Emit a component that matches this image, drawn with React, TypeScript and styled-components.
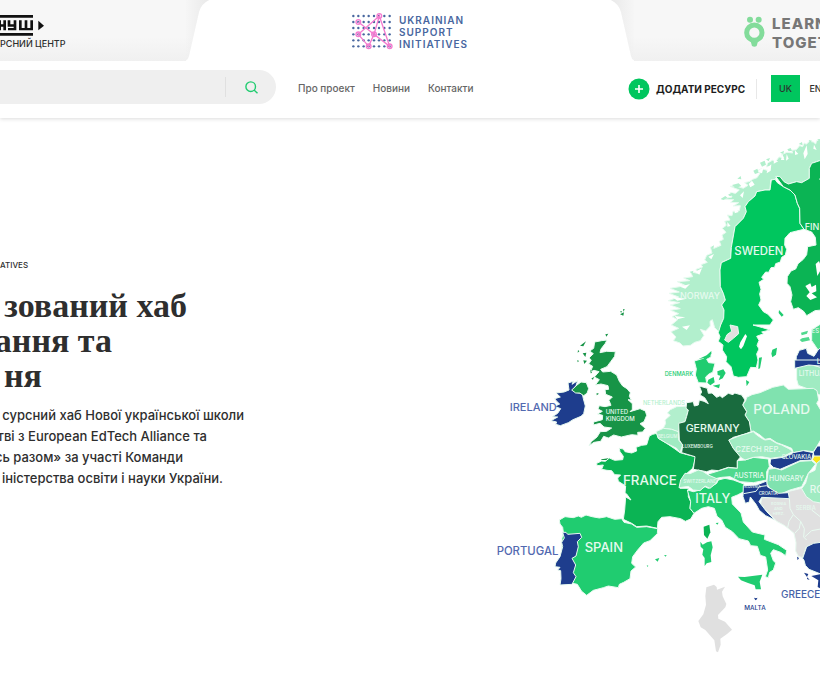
import React from "react";
import styled, { createGlobalStyle } from "styled-components";

const GlobalStyle = createGlobalStyle`
  * { box-sizing: border-box; }
  body { margin: 0; background: #fff; color: #2e2e2e; font-family: Inter, "Noto Sans", sans-serif; overflow-x: hidden; }
  button, input { font: inherit; color: inherit; border: 0; padding: 0; background: none; }
  a { color: inherit; text-decoration: none; }
`;

const Header = styled.header`
  height: 118px;
  background: #fff;
  box-shadow: 0 1px 4px rgba(0, 0, 0, 0.14);
`;
const BrandBar = styled.div`
  display: grid;
  grid-template-columns: minmax(0, 1fr) 448px minmax(0, 1fr);
  height: 61px;
`;
const SideBrand = styled.a<{ $end?: boolean }>`
  display: flex;
  justify-content: ${(p) => (p.$end ? "flex-end" : "flex-start")};
  align-items: flex-start;
  overflow: hidden;
  padding-top: 14px;
  background: linear-gradient(#f7f7f7 60%, #f0f0f0);
`;
const CenterTab = styled.div`
  display: flex;
  justify-content: space-between;
`;
const CenterBrand = styled.a`
  display: flex;
  align-items: flex-start;
  gap: 6px;
  padding-top: 13px;
`;
const CenterName = styled.span`
  padding-top: 1px;
  font: 600 10px/12px Inter, sans-serif;
  letter-spacing: 1px;
  color: #48679f;
`;
const NushBrand = styled.span`
  display: flex;
  flex-direction: column;
  gap: 1px;
  font: 500 9px/12px Inter, sans-serif;
  white-space: nowrap;
`;
const LearnBrand = styled.span`
  display: flex;
  flex: none;
  gap: 7px;
  width: 76px;
  color: #777;
  font: 800 15px/19px Inter, sans-serif;
  letter-spacing: 1px;

  svg { flex: none; }
`;
const MenuBar = styled.div`
  display: flex;
  align-items: center;
  height: 52px;
`;
const Search = styled.form`
  display: flex;
  align-items: center;
  flex: 0 0 276px;
  height: 34px;
  background: #efefef;
  border-radius: 0 17px 17px 0;
`;
const SearchInput = styled.input`
  flex: 1;
  min-width: 0;
  height: 20px;
  padding: 0 16px;
  border-right: 1px solid #e0e0e0;
  font-size: 12px;
  outline: none;
`;
const SearchButton = styled.button`
  display: flex;
  justify-content: center;
  width: 50px;
`;
const Nav = styled.nav`
  display: flex;
  gap: 18px;
  margin-left: 22px;
  padding-top: 2px;
  font: 500 10px/16px Inter, sans-serif;
  color: #666;
`;
const Actions = styled.div`
  display: flex;
  align-items: center;
  flex: 0 0 192px;
  margin-left: auto;
  padding-top: 3px;
  overflow: hidden;
  white-space: nowrap;
`;
const AddButton = styled.button`
  display: flex;
  align-items: center;
  gap: 6px;
  width: 128px;
  flex: none;
  font: 700 10px/20px Inter, sans-serif;
  color: #1d1d1d;
`;
const Languages = styled.div`
  display: flex;
  flex: none;
  padding: 0 0 0 15px;
  background: linear-gradient(#e8e8e8, #e8e8e8) left center / 1px 20px no-repeat;
`;
const LanguageButton = styled.button<{ $active?: boolean }>`
  width: 29px;
  height: 27px;
  font: 500 9px/27px Inter, sans-serif;
  margin-right: 1px;
  background: ${(p) => (p.$active ? "#00c65e" : "transparent")};
`;

const Hero = styled.main`
  display: flex;
  justify-content: space-between;
  align-items: flex-start;
  padding-top: 12px;
`;
const Intro = styled.section`
  flex: none;
  padding-top: 127px;
`;
const Kicker = styled.p`
  margin: 0;
  font: 500 8px/16px Inter, sans-serif;
`;
const Title = styled.h1`
  margin: 15px 0 0;
  font: 700 34px/35px "Liberation Serif", serif;
`;
const Lead = styled.p`
  margin: 12px 0 0;
  font: 500 13px/21px Inter, sans-serif;
`;
const Line = styled.span<{ $width: number }>`
  display: flex;
  justify-content: flex-end;
  width: ${(p) => p.$width}px;
  white-space: nowrap;
`;
const MapFigure = styled.figure`
  flex: 0 0 330px;
  margin: 0;
`;
const MapSvg = styled.svg`
  display: block;
  width: 100%;
  height: auto;
  font-family: Inter, "Noto Sans", sans-serif;
`;

const NushLogo = () => (
  <svg width="45" height="23" viewBox="0 0 135 69" aria-label="НУШ">
    <path d="M0 3H99V11H0zM0 57H99V65H0z" fill="#111" />
    <path d="M-6 19H3V31H10V19H18V49H10V38H3V49H-6zM23 19H31V31H41V19H49V49H24V42H41V38H23zM57 19H65V42H74V19H82V42H91V19H99V49H57z" fill="#111" />
    <path d="M115 20L132 35L115 49z" fill="#111" />
  </svg>
);

const OwlLogo = () => (
  <svg width="21" height="33" viewBox="0 0 63 99">
    <g fill="#83dc9b"><circle cx="18" cy="17" r="9" /><circle cx="44" cy="17" r="9" /><path d="M20 82H42L38 96Q31 101 24 96z" /></g>
    <circle cx="31" cy="56" r="23" fill="#f7f7f7" stroke="#83dc9b" strokeWidth="15" />
  </svg>
);

const gridX = [4, 19, 35, 50, 66, 81, 97, 113];
const gridY = [9, 27, 45, 64, 82, 100];
const NetworkLogo = () => (
  <svg width="41" height="38" viewBox="0 0 123 114">
    {gridY.map((y) => gridX.map((x) => <circle key={`${x}-${y}`} cx={x} cy={y} r="3.6" fill="#48679f" />))}
    <g fill="none" stroke="#f47bd0" strokeWidth="4">
      <path d="M82 9L19 64L50 100L66 64L82 9L113 100L66 64L19 27" />
      {[[82, 9], [19, 27], [19, 64], [66, 64], [50, 100], [113, 100]].map(([x, y]) => <circle key={`${x}${y}`} cx={x} cy={y} r="7" />)}
    </g>
  </svg>
);

const TabEdge = ({ flip = false }: { flip?: boolean }) => (
  <svg width="24" height="61" viewBox="0 0 24 61" aria-hidden="true">
    <defs>
      <linearGradient id={flip ? "edgeR" : "edgeL"} x2="0" y2="1"><stop offset=".6" stopColor="#f6f6f6" /><stop offset="1" stopColor="#f0f0f0" /></linearGradient>
      <linearGradient id={flip ? "rimR" : "rimL"}><stop offset="0" stopColor="#e9e9e9" stopOpacity="0" /><stop offset="1" stopColor="#e9e9e9" /></linearGradient>
    </defs>
    <g transform={flip ? "matrix(-1 0 0 1 24 0)" : undefined}>
      <path d="M0 0H23Q15 4 13 12L3 56Q2 61-4 61H0z" fill={flip ? "url(#edgeR)" : "url(#edgeL)"} />
      <path d="M0 0H23Q15 4 13 12L3 56Q2 61 0 61z" fill={flip ? "url(#rimR)" : "url(#rimL)"} />
    </g>
  </svg>
);

const C = { pale: "#b2efcd", mint: "#a0ebc2", soft: "#80e2af", mid: "#50d98e", light: "#20cc70", bright: "#00c65e", green: "#0bb454", uk: "#179447", deep: "#196b3e", blue: "#1e3d8d", grey: "#e0e0e0" };

type Shape = [fill: string, path: string];
type Region = { x: number; y: number; shapes: Shape[]; islands?: Shape[] };

const regions: Region[] = [
  {
    x: 450, y: 0,
    shapes: [
      [C.pale, "M545 30L530 32 527 42 520 36 508 34 499 43 493 39 488 50 479 47 469 59 455 61 458 69 441 67 425 74 431 83 417 81 407 95 397 91 383 99 379 111 392 109 381 121 365 116 349 124 360 130 351 143 338 148 330 154 314 158 324 166 310 175 288 168 270 169 298 180 287 190 270 188 276 201 243 208 281 209 272 217 296 218 280 228 301 227 298 242 279 244 276 257 262 255 270 270 254 274 259 286 247 295 258 307 246 315 250 328 238 334 243 346 222 355 211 351 216 369 200 376 194 390 202 397 183 404 188 411 168 418 172 430 151 425 158 440 131 444 149 452 112 455 137 467 90 475 118 486 87 490 116 501 85 512 119 518 91 525 121 536 92 541 116 551 96 560 113 569 94 585 116 595 93 605 108 621 100 632 120 639 129 648 151 646 164 637 181 632 192 616 181 598 197 603 211 588 210 574 217 569 224 593 239 608 242 585 251 565 252 540 245 525 256 510 250 490 241 470 240 420 244 398 272 385 274 352 285 290 310 265 319 245 315 230 325 215 345 198 350 185 375 180 390 180 392 150 405 148 412 138 430 155 445 162 470 155 485 158 508 145 508 115 515 100 530 95 545 90z"],
      [C.bright, "M394 150L405 148 412 158 430 170 450 180 465 195 472 220 479 235 480 280 492 298 470 303 450 308 435 325 434 345 440 358 436 375 425 382 421 396 407 401 404 412 393 413 386 427 377 426 365 442 371 448 357 457 363 478 359 492 363 510 356 525 370 545 383 552 400 570 390 585 339 585 368 593 390 600 365 606 371 611 350 619 357 631 351 646 357 657 350 672 354 690 349 713 332 712 320 740 295 742 280 738 273 710 258 695 260 680 247 660 249 645 235 634 240 620 235 608 242 585 251 565 252 540 245 525 256 510 250 490 241 470 240 420 244 398 272 385 274 352 285 290 310 265 319 245 315 230 325 215 345 198 350 185 375 180 390 180z"],
      [C.green, "M407 139L420 140 432 155 445 162 470 155 485 158 508 145 508 115 515 100 530 95 545 90V540L525 542 500 557 491 544 475 533 460 538 452 515 456 495 450 470 441 460 442 440 453 423 467 417 474 401 490 388 500 374 503 350 528 345 526 322 515 306 492 298 480 280 479 235 472 220 465 195 450 180 430 170z"],
      [C.grey, "M270 585L293 590 296 611 280 625 265 637 254 630 261 614 275 604z"],
      [C.mid, "M515 599L545 580V665L532 657 522 642 515 632z"],
      [C.blue, "M466 715L469 680 478 661 499 655 503 670 522 679 534 660 545 650V713L502 702z"],
      [C.mint, "M470 715L482 705 516 705 545 713V797L520 787 502 776 475 766 470 748z"],
      [C.light, "M163 693L190 685 213 668 213 681 200 688 206 698 225 700 218 727 208 731 197 741 200 759 175 758 166 735 169 717z"],
    ],
    islands: [
      ["#fff", "M316 612L321 619 310 648 303 658 297 650 301 637z M527 402L537 393 545 415 532 438zM496 468L511 460 515 471 528 464 529 484 515 490 531 502 511 510 499 498 509 487z M536 147L545 144V152z M290 74L296 82 278 89zM361 94L372 100 353 112 347 103zM465 61L475 72 465 75zM490 70L500 46 503 72 494 88zM402 90L415 94 401 101zM350 125L371 112 366 130zM427 73L433 90 423 90zM336 152L344 164 331 172 326 162zM300 196L312 184 308 204zM383 112L394 103 392 122 380 130zM440 72L446 86 438 92zM522 44L530 60 520 56zM284 232L296 246 284 250zM262 276L272 288 262 290zM205 380L222 372 214 388zM165 425L186 415 178 434zM120 470L150 462 136 476zM96 500L140 506 112 512zM104 558L136 562 112 568zM126 590L150 586 140 600z"],
      [C.pale, "M243 206L256 198 262 203 250 210zM264 194L276 188 283 193 270 199zM276 165L296 160 304 168 288 174zM292 146L302 138 304 148zM340 122L352 116 356 128 345 132zM360 98L374 92 378 104 366 110zM378 88L390 84 386 94zM420 68L432 62 430 72zM442 58L452 54 456 62 446 64zM476 42L486 36 488 46zM506 30L516 32 510 38zM532 28L545 26 538 36zM212 352L222 346 220 356zM150 426L160 422 158 432z"],
      [C.light, "M417 540L431 555 425 560 416 549zM397 659L411 653 408 674 397 682 394 671zM357 683L366 682 360 715 355 717z"],
      [C.mid, "M483 608L504 602 501 611 485 616zM486 625L506 621 510 631 486 636 479 630z"],
      [C.light, "M205 749L221 741 224 757 211 766 202 758zM232 724L250 718 257 729 248 745 236 751 241 737 233 735zM218 767L240 763 237 775zM318 750L328 756 320 769zM176 687L200 676 214 663 214 672 198 683z"],
    ],
  },
  {
    x: 0, y: 510,
    shapes: [
      [C.uk, "M314 126L335 122 351 120 346 130 333 147 330 158 350 154 376 155 374 169 362 185 351 200 332 208 338 216 362 214 380 225 388 244 398 258 411 266 421 278 418 289 424 300 414 299 427 311 427 328 420 335 450 326 466 333 470 346 462 365 450 371 466 385 458 396 443 397 444 406 425 404 394 411 371 405 355 414 341 409 332 424 312 427 297 437 304 425 321 411 331 395 350 394 365 384 342 381 330 370 310 375 311 366 337 359 338 346 323 342 337 334 324 327 328 317 345 320 363 316 357 301 367 291 347 283 345 269 356 268 354 257 333 252 316 255 328 239 313 231 327 215 312 211 301 216 308 199 296 192 304 180 297 174 310 161 299 153 311 145z"],
      [C.blue, "M234 249L250 244 246 253 263 242 258 257 248 270 257 277 277 281 280 296 286 318 281 341 273 349 249 359 235 368 211 377 197 373 200 366 183 362 203 351 187 350 203 340 212 326 194 319 209 312 201 305 194 296 211 291 198 279 222 276 237 270z"],
      [C.uk, "M261 255L273 246 289 248 296 266 291 280 281 287 269 279 257 279 245 270z"],
    ],
    islands: [
      [C.uk, "M270 137L288 124 280 139zM278 160L289 158 286 171zM280 181L291 182 283 192zM262 180L267 183 263 187zM264 150L268 154 263 158zM346 103L355 101 349 110zM390 43L402 37 400 47zM391 33L396 34 393 39zM399 28L404 27 401 35zM304 236L312 230 309 239zM301 208L306 219 302 220zM320 279L327 281 320 286zM334 478L355 475 361 480H334z"],
    ],
  },
  {
    x: 0, y: 0,
    shapes: [
      [C.green, "M320 1000L335 993 346 994 358 984 374 991 398 989 400 979 390 965 388 955 400 957 405 965 425 969 440 963 438 952 455 946 470 944 478 918 488 913 500 910 505 925 530 940 555 957 570 968 595 975 618 980 608 1015 585 1035 572 1065 570 1075 595 1075 595 1100 602 1115 600 1135 612 1150 602 1167 586 1174 572 1166 540 1160 515 1162 504 1175 502 1195 470 1188 440 1190 425 1180 400 1168 404 1140 407 1101 423 1110 410 1092 405 1088 407 1068 385 1054 383 1044 392 1035 374 1034 365 1022 351 1021 335 1018 340 1005 321 1007z"],
      [C.light, "M208 1170L225 1160 250 1163 265 1158 274 1162 288 1155 306 1160 328 1164 350 1160 374 1168 395 1166 402 1177 425 1182 440 1192 470 1190 503 1196 502 1211 480 1232 461 1239 443 1260 428 1280 425 1300 437 1311 423 1323 420 1346 401 1357 388 1363 385 1373 355 1368 340 1373 310 1381 290 1396 275 1384 262 1363 248 1360 215 1353 216 1225 220 1207 218 1192 210 1182z"],
      [C.blue, "M218 1207L228 1207 233 1213 270 1210 275 1222 262 1235 265 1250 258 1278 246 1285 257 1305 250 1328 258 1340 246 1363 210 1365 213 1346 212 1322 203 1320 210 1312 195 1310 197 1299 210 1280 218 1250 215 1237 223 1224z"],
    ],
    islands: [
      [C.light, "M470 1306L475 1307 473 1311z"],
    ],
  },
  {
    x: 480, y: 690,
    shapes: [
      [C.soft, "M290 112L306 104 330 98 368 82 400 75 415 88 490 85 501 92 506 120 500 130 512 150V240L500 260 490 275 465 272 430 278 425 265 400 255 380 248 360 235 345 238 330 225 310 213 303 215 298 185 285 165 290 155 278 135 287 122z"],
      [C.pale, "M40 205L47 190 45 180 61 166 52 159 61 149 80 140 112 138 115 150 105 185 88 190 86 217 65 208z"],
      [C.mint, "M18 215L40 205 65 208 85 215 86 240 98 255 90 278 80 265 50 250 25 235z"],
      [C.deep, "M148 78L155 80 172 85 175 100 186 99 200 112 210 107 217 113 235 100 249 104 254 99 275 105 285 120 278 135 290 155 285 165 298 185 303 215 285 222 250 232 238 240 250 265 272 290 262 302 262 325 235 322 205 332 185 330 170 335 130 328 135 290 95 278 98 255 88 240 86 190 105 185 110 169 115 150 108 145 110 128 130 125 133 138 145 135 148 120 162 124 175 131 164 113 150 105 155 96z"],
      [C.mid, "M175 342L205 333 235 323 262 325 262 302 285 300 310 292 355 297 358 320 350 335 350 360 310 368 270 365 240 350 215 352 180 359z"],
      [C.mint, "M236 240L275 225 310 215 320 225 335 235 345 240 360 238 380 250 395 255 420 268 427 275 400 290 362 295 335 290 310 292 285 300 272 292 250 265z"],
      [C.blue, "M362 297L400 292 430 278 460 272 490 278 485 300 450 302 420 315 390 328 370 322 360 312zM490 277L502 258 512 258V290H492zM434 25V0H512V18L476 15z"],
      ["#fae41c", "M487 299L492 288H512V320L498 309z"],
      [C.soft, "M355 328L375 325 395 330 420 318 450 304 485 302 497 312 475 340 455 380 420 390 385 405 365 395 350 370z"],
    ],
  },
  {
    x: 480, y: 990,
    shapes: [
      [C.grey, "M335 113L418 112 413 95 455 85 472 111 512 128V248L485 255 469 260 458 293 445 289 437 273 438 248 432 220 412 203 401 195 380 184 350 153 332 132z"],
      ["none", "M418 112L420 145 430 164 417 184 413 203M430 164L452 184 448 205 434 220M452 184L463 206 461 231 470 240M465 230L485 212 512 207M485 150L512 171"],
      [C.mint, "M512 0L500 10 495 31 475 40 467 69 455 86 469 110 490 125 512 129z"],
      [C.light, "M112 90L130 95 150 90 165 80 175 85 200 70 205 60 225 55 250 60 282 72 282 95 262 105 245 112 247 132 273 159 280 186 307 216 345 225 343 238 385 254 410 271 407 287 392 277 370 269 362 280 370 302 377 309 370 330 359 337 355 353 346 350 353 330 347 291 331 286 322 259 302 257 295 243 267 236 247 215 226 202 215 180 201 169 193 145 175 140 155 145 132 160 120 145 122 125z"],
      [C.mint, "M87 83L92 60 105 40 120 41 145 30 158 34 175 45 205 58 198 70 180 85 165 78 150 92 130 90 115 79z"],
      [C.blue, "M280 77L320 75 350 63 352 80 385 100 415 98 418 116 335 112 327 125 350 155 375 180 347 167 328 151 318 133 301 111 298 126 286 130 279 110zM458 295L470 260 491 250 512 247V342L477 328 466 316 462 301z"],
      ["none", "M281 101L318 94 328 80 350 77"],
    ],
    islands: [
      [C.blue, "M484 348L512 342V386L503 381 505 361zM441 290L447 294 443 301zM462 338L475 342 471 351zM472 352L479 360 471 357zM312 413L318 415 322 413 321 418 316 421z"],
      [C.green, "M161 200L178 194 181 217 172 236 162 225z"],
      [C.light, "M151 245L158 254 171 247 184 244 188 262 182 286 184 306 170 310 164 318 164 294 157 284 160 268 152 260z"],
      [C.light, "M264 350L284 351 307 348 337 344 329 365 333 388 317 388 314 376 294 369 273 361z"],
      [C.grey, "M169 382L192 374 200 381 201 389 225 380 216 395 218 409 229 432 226 442 204 465 205 476 225 485 246 509 231 522 211 536 212 554 204 577 198 574 193 541 166 510 152 502 145 483 160 463 168 434 166 408z"],
      [C.light, "M15 298L28 294 23 305zM42 286L50 285 47 290zM197 189L206 188 202 194z"],
    ],
  },
];

type Label = { text: string; x: number; y: number; size: number; color?: string; weight?: number };
const labels: Label[] = [
  { text: "SWEDEN", x: 733, y: 375, size: 34 },
  { text: "FIN", x: 944, y: 301, size: 27 },
  { text: "NORWAY", x: 570, y: 508, size: 27 },
  { text: "DENMARK", x: 524, y: 737, size: 17, color: C.light },
  { text: "ES", x: 965, y: 609, size: 18 },
  { text: "LITHUA", x: 926, y: 737, size: 21 },
  { text: "L", x: 980, y: 702, size: 21 },
  { text: "IRELAND", x: 59, y: 842, size: 33, color: "#5269b0" },
  { text: "UNITED", x: 347, y: 852, size: 18 },
  { text: "KINGDOM", x: 347, y: 873, size: 18 },
  { text: "NETHERLANDS", x: 459, y: 824, size: 17, color: C.pale },
  { text: "POLAND", x: 790, y: 852, size: 41 },
  { text: "GERMANY", x: 587, y: 906, size: 32 },
  { text: "BELGIUM", x: 504, y: 924, size: 13 },
  { text: "LUXEMBOURG", x: 576, y: 953, size: 13 },
  { text: "CZECH REP.", x: 736, y: 965, size: 23 },
  { text: "SLOVAKIA", x: 875, y: 988, size: 18 },
  { text: "AUSTRIA", x: 731, y: 1045, size: 21 },
  { text: "HUNGARY", x: 837, y: 1053, size: 21 },
  { text: "SWITZERLAND", x: 580, y: 1058, size: 14 },
  { text: "SLOVENIA", x: 762, y: 1075, size: 10 },
  { text: "CROATIA", x: 806, y: 1096, size: 13 },
  { text: "BOSNIA", x: 843, y: 1125, size: 12 },
  { text: "AND", x: 852, y: 1139, size: 12 },
  { text: "HERZ.", x: 848, y: 1154, size: 12 },
  { text: "SERBIA", x: 917, y: 1139, size: 17 },
  { text: "FRANCE", x: 399, y: 1064, size: 40 },
  { text: "ITALY", x: 616, y: 1119, size: 38 },
  { text: "RO", x: 959, y: 1088, size: 30 },
  { text: "SPAIN", x: 284, y: 1266, size: 39 },
  { text: "PORTUGAL", x: 20, y: 1276, size: 34, color: "#5269b0" },
  { text: "MALTA", x: 763, y: 1440, size: 19, color: C.blue },
  { text: "GREECE", x: 873, y: 1405, size: 30, color: "#4562a8" },
];

const EuropeMap = () => (
  <MapSvg viewBox="0 0 990 1590" role="img" aria-label="Мапа Європи">
    {regions.map((region, r) => (
      <g key={r} transform={`translate(${region.x} ${region.y})`}>
        <g stroke="#e9fbf1" strokeWidth="3" strokeLinejoin="round">
          {region.shapes.map(([fill, path], s) => <path key={s} d={path} fill={fill} />)}
        </g>
        {region.islands?.map(([fill, path], s) => <path key={s} d={path} fill={fill} />)}
      </g>
    ))}
    {labels.map((l) => (
      <text key={l.text} x={l.x} y={l.y} fontSize={l.size} fontWeight={l.weight ?? 500} fill={l.color ?? "#e6faef"}>{l.text}</text>
    ))}
  </MapSvg>
);

const titleLines = [{ text: "зований хаб", width: 187 }, { text: "ання та", width: 112 }, { text: "ня", width: 42 }];
const leadLines = [
  { text: "сурсний хаб Нової української школи", width: 244 },
  { text: "тві з European EdTech Alliance та", width: 207 },
  { text: "сь разом» за участі Команди", width: 183 },
  { text: "іністерства освіти і науки України.", width: 223 },
];

export default function App() {
  return (
    <>
      <GlobalStyle />
      <Header>
        <BrandBar>
          <SideBrand href="#nush">
            <NushBrand><NushLogo /><span>РСНИЙ ЦЕНТР</span></NushBrand>
          </SideBrand>
          <CenterTab>
            <TabEdge />
            <CenterBrand href="#initiatives">
              <NetworkLogo />
              <CenterName>UKRAINIAN<br />SUPPORT<br />INITIATIVES</CenterName>
            </CenterBrand>
            <TabEdge flip />
          </CenterTab>
          <SideBrand href="#learn" $end>
            <LearnBrand><OwlLogo /><span>LEARN<br />TOGETHER</span></LearnBrand>
          </SideBrand>
        </BrandBar>
        <MenuBar>
          <Search onSubmit={(e) => e.preventDefault()}>
            <SearchInput type="text" aria-label="Пошук" />
            <SearchButton type="submit" aria-label="Шукати">
              <svg width="13" height="13" viewBox="0 0 13 13" fill="none" stroke="#20cc70" strokeWidth="1.4"><circle cx="5.7" cy="5.7" r="4.8" /><path d="M9 9L12.5 12.3" /></svg>
            </SearchButton>
          </Search>
          <Nav>
            <a href="#about">Про проект</a>
            <a href="#news">Новини</a>
            <a href="#contacts">Контакти</a>
          </Nav>
          <Actions>
            <AddButton type="button">
              <svg width="22" height="22" viewBox="0 0 22 22"><circle cx="11" cy="11" r="10.5" fill="#00c65e" /><path d="M11 7V15M7 11H15" stroke="#fff" strokeWidth="1.6" /></svg>
              ДОДАТИ РЕСУРС
            </AddButton>
            <Languages>
              <LanguageButton type="button" $active>UK</LanguageButton>
              <LanguageButton type="button">EN</LanguageButton>
            </Languages>
          </Actions>
        </MenuBar>
      </Header>
      <Hero>
        <Intro>
          <Kicker>ATIVES</Kicker>
          <Title>{titleLines.map((l) => <Line key={l.text} $width={l.width}>{l.text}</Line>)}</Title>
          <Lead>{leadLines.map((l) => <Line key={l.text} $width={l.width}>{l.text}</Line>)}</Lead>
        </Intro>
        <MapFigure><EuropeMap /></MapFigure>
      </Hero>
    </>
  );
}
